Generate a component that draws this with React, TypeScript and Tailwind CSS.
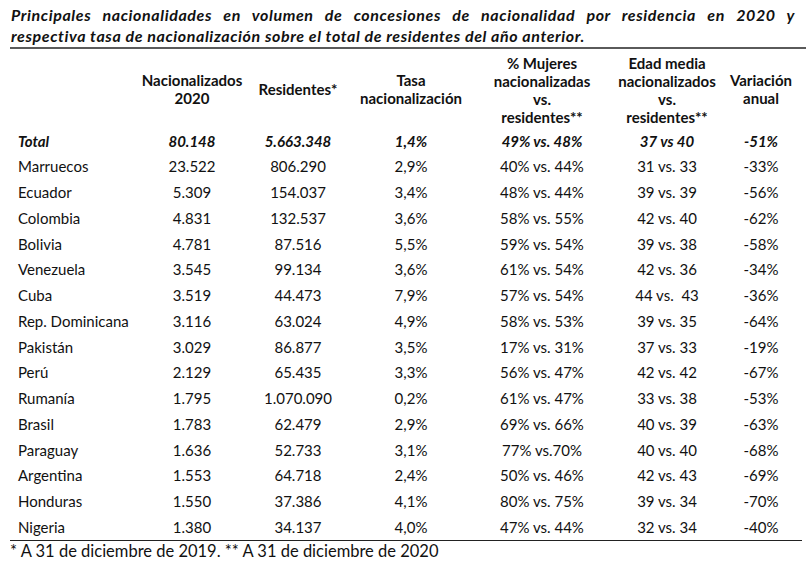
import React from "react";

const rows: [string, string, string, string, string, string, string][] = [
  ["Marruecos", "23.522", "806.290", "2,9%", "40% vs. 44%", "31 vs. 33", "-33%"],
  ["Ecuador", "5.309", "154.037", "3,4%", "48% vs. 44%", "39 vs. 39", "-56%"],
  ["Colombia", "4.831", "132.537", "3,6%", "58% vs. 55%", "42 vs. 40", "-62%"],
  ["Bolivia", "4.781", "87.516", "5,5%", "59% vs. 54%", "39 vs. 38", "-58%"],
  ["Venezuela", "3.545", "99.134", "3,6%", "61% vs. 54%", "42 vs. 36", "-34%"],
  ["Cuba", "3.519", "44.473", "7,9%", "57% vs. 54%", "44 vs.  43", "-36%"],
  ["Rep. Dominicana", "3.116", "63.024", "4,9%", "58% vs. 53%", "39 vs. 35", "-64%"],
  ["Pakistán", "3.029", "86.877", "3,5%", "17% vs. 31%", "37 vs. 33", "-19%"],
  ["Perú", "2.129", "65.435", "3,3%", "56% vs. 47%", "42 vs. 42", "-67%"],
  ["Rumanía", "1.795", "1.070.090", "0,2%", "61% vs. 47%", "33 vs. 38", "-53%"],
  ["Brasil", "1.783", "62.479", "2,9%", "69% vs. 66%", "40 vs. 39", "-63%"],
  ["Paraguay", "1.636", "52.733", "3,1%", "77% vs.70%", "40 vs. 40", "-68%"],
  ["Argentina", "1.553", "64.718", "2,4%", "50% vs. 46%", "42 vs. 43", "-69%"],
  ["Honduras", "1.550", "37.386", "4,1%", "80% vs. 75%", "39 vs. 34", "-70%"],
  ["Nigeria", "1.380", "34.137", "4,0%", "47% vs. 44%", "32 vs. 34", "-40%"],
];

const grid =
  "grid grid-cols-[130px_104px_108px_118px_144px_106px_82px]";

export default function App() {
  return (
    <div
      className="w-[811px] h-[562px] bg-white text-[#111] overflow-hidden"
      style={{ fontFamily: "Lato, 'Open Sans', sans-serif" }}
    >
      <div className="pl-[11px] pr-[16px] pt-[4px] text-[16px] leading-[21px] font-bold italic tracking-[0.6px]">
        <div className="text-justify [text-align-last:justify]">
          Principales nacionalidades en volumen de concesiones de nacionalidad por residencia en 2020 y
        </div>
        <div>respectiva tasa de nacionalización sobre el total de residentes del año anterior.</div>
      </div>
      <div className="ml-[10px] w-[796px] mt-[1px] border-t-2 border-[#5a5a5a]">
        <div className={`${grid} h-[79px] items-center text-center font-bold text-[15px] leading-[18px]`}>
          <div />
          <div>Nacionalizados<br />2020</div>
          <div>Residentes*</div>
          <div>Tasa<br />nacionalización</div>
          <div className="pt-[2px]">% Mujeres<br />nacionalizadas<br />vs.<br />residentes**</div>
          <div className="pt-[2px]">Edad media<br />nacionalizados<br />vs.<br />residentes**</div>
          <div>Variación<br />anual</div>
        </div>
        <div className={`${grid} h-[25.75px] items-center text-center font-bold italic text-[15px]`}>
          <div className="text-left pl-[8px]">Total</div>
          <div>80.148</div>
          <div>5.663.348</div>
          <div>1,4%</div>
          <div>49% vs. 48%</div>
          <div>37 vs 40</div>
          <div>-51%</div>
        </div>
        {rows.map((r) => (
          <div key={r[0]} className={`${grid} h-[25.75px] items-center text-center text-[15px]`}>
            <div className="text-left pl-[8px] whitespace-nowrap">{r[0]}</div>
            {r.slice(1).map((c, i) => (
              <div key={i} className="whitespace-pre">{c}</div>
            ))}
          </div>
        ))}
        <div className="border-t border-[#222] w-[792px]" />
      </div>
      <div className="pl-[10px] text-[16.5px] leading-[21px]">
        * A 31 de diciembre de 2019. ** A 31 de diciembre de 2020
      </div>
    </div>
  );
}
